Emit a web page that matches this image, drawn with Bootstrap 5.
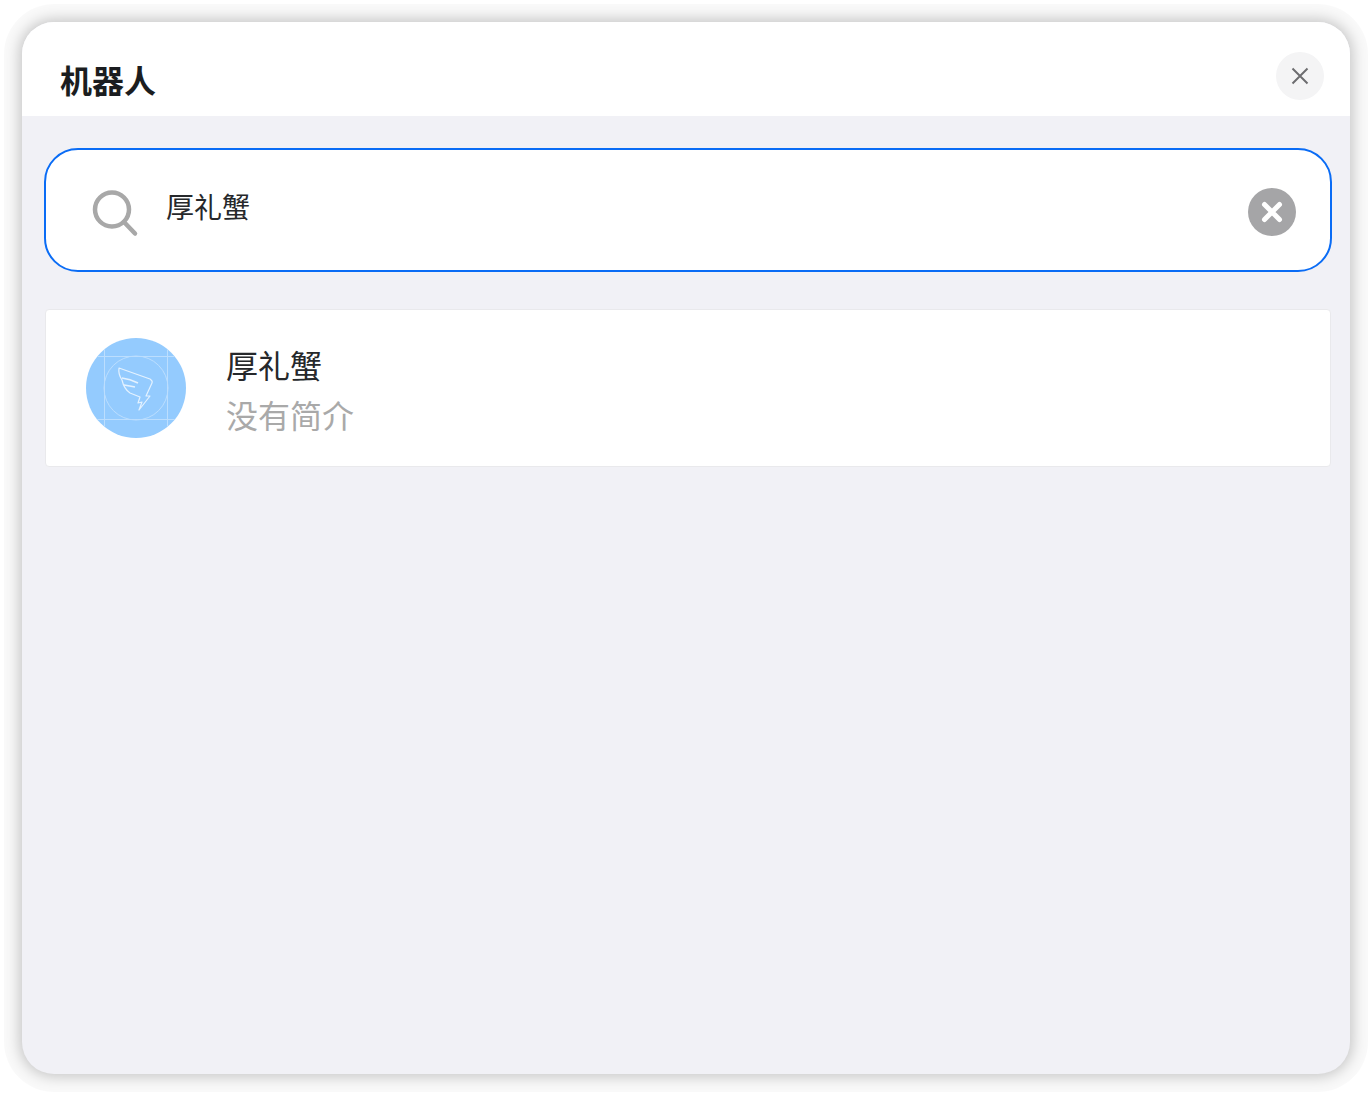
<!DOCTYPE html>
<html lang="zh-CN">
<head>
    <meta charset="UTF-8">
    <meta name="viewport" content="width=device-width, initial-scale=1.0">
    <title>机器人</title>
    <link rel="stylesheet" href="https://cdn.jsdelivr.net/npm/bootstrap@5.3.0/dist/css/bootstrap.min.css">
    <style>
        html, body { height: 100%; }
        body { background: #fff; font-family: "Liberation Sans", "Noto Sans CJK SC", sans-serif; overflow: hidden; }
        .page-wrap { height: 1096px; padding: 22px; }
        .robot-modal { height: 1052px; background: #f1f1f6; border-radius: 32px; overflow: hidden; box-shadow: 0 0 14px 3px rgba(0, 0, 0, .2), 0 0 0 18px rgba(0, 0, 0, .025); }
        .robot-head { height: 94px; background: #fff; padding: 0 26px 0 38px; }
        .robot-title { font-size: 32px; font-weight: 700; line-height: 40px; color: #1b1d20; margin: 40px 0 0; }
        .close-round { width: 48px; height: 48px; margin-top: 30px; background: #f4f4f5; border: 0; border-radius: 50%; padding: 0; }
        .robot-body { padding: 32px 18px 0 22px; }
        .search-box { height: 124px; background: #fff; border: 2px solid #0a6cf5; border-radius: 34px; padding: 0 34px 0 45px; }
        .search-ico { overflow: visible; }
        .search-input { font-size: 28px; line-height: 36px; color: #26282b; padding: 0; margin: 0 0 2px 27px; border: 0; background: transparent; box-shadow: none !important; }
        .clear-round { width: 48px; height: 48px; background: #a5a5a7; border: 0; border-radius: 50%; padding: 0; margin-top: 4px; }
        .robot-item { height: 158px; margin: 37px 1px 0; background: #fff; border: 1px solid #e9e9ec; border-radius: 4px; padding: 0 40px; }
        .robot-name { font-size: 32px; line-height: 50px; color: #26282b; }
        .robot-desc { font-size: 32px; line-height: 50px; color: #a9a9a9; }
        .avatar-text { margin: 8px 0 0 40px; }
    </style>
</head>
<body>
    <div class="page-wrap">
        <div class="robot-modal d-flex flex-column">
            <div class="robot-head d-flex justify-content-between align-items-start">
                <h5 class="robot-title">机器人</h5>
                <button class="close-round d-flex align-items-center justify-content-center" type="button" aria-label="关闭">
                    <svg width="20" height="20" viewBox="0 0 20 20"><path d="M2.5 2.5 17.5 17.5M17.5 2.5 2.5 17.5" stroke="#6d6d70" stroke-width="2" fill="none"/></svg>
                </button>
            </div>
            <div class="robot-body flex-grow-1">
                <div class="search-box d-flex align-items-center">
                    <svg class="search-ico flex-shrink-0" width="48" height="48" viewBox="0 0 48 48"><circle cx="21" cy="23.5" r="17" stroke="#a8a8a8" stroke-width="4.5" fill="none"/><path d="M33 36 44 47.5" stroke="#a8a8a8" stroke-width="4.5" stroke-linecap="round" fill="none"/></svg>
                    <input class="form-control search-input flex-grow-1" type="text" value="厚礼蟹">
                    <button class="clear-round d-flex align-items-center justify-content-center flex-shrink-0" type="button" aria-label="清除">
                        <svg width="22" height="22" viewBox="0 0 22 22"><path d="M3.5 3.5 18.5 18.5M18.5 3.5 3.5 18.5" stroke="#fff" stroke-width="5" stroke-linecap="round" fill="none"/></svg>
                    </button>
                </div>
                <div class="robot-item d-flex align-items-center">
                    <svg class="flex-shrink-0" width="100" height="100" viewBox="0 0 100 100">
                        <defs><clipPath id="avatarClip"><circle cx="50" cy="50" r="50"/></clipPath></defs>
                        <circle cx="50" cy="50" r="50" fill="#94cbfe"/>
                        <g clip-path="url(#avatarClip)" stroke="#bcdefe" stroke-width="1" fill="none">
                            <path d="M18.5 0V100M81.5 0V100M0 18.5H100M0 81.5H100"/>
                            <circle cx="50" cy="50" r="32"/>
                        </g>
                        <g stroke="#e4f2ff" stroke-width="1.2" stroke-linejoin="round" fill="none">
                            <path d="M33 30 64 41Q67 43 66 45L60 58 64 58 53 72 56 64 52 65 54 59 44 55Q38 51 36 42 32 36 33 30Z"/>
                            <path d="M36 40Q44 41 52 45M38 47Q44 48 49 49" stroke-width="1.6"/>
                        </g>
                    </svg>
                    <div class="avatar-text">
                        <div class="robot-name">厚礼蟹</div>
                        <div class="robot-desc">没有简介</div>
                    </div>
                </div>
            </div>
        </div>
    </div>
    <script src="https://cdn.jsdelivr.net/npm/bootstrap@5.3.0/dist/js/bootstrap.bundle.min.js"></script>
</body>
</html>
